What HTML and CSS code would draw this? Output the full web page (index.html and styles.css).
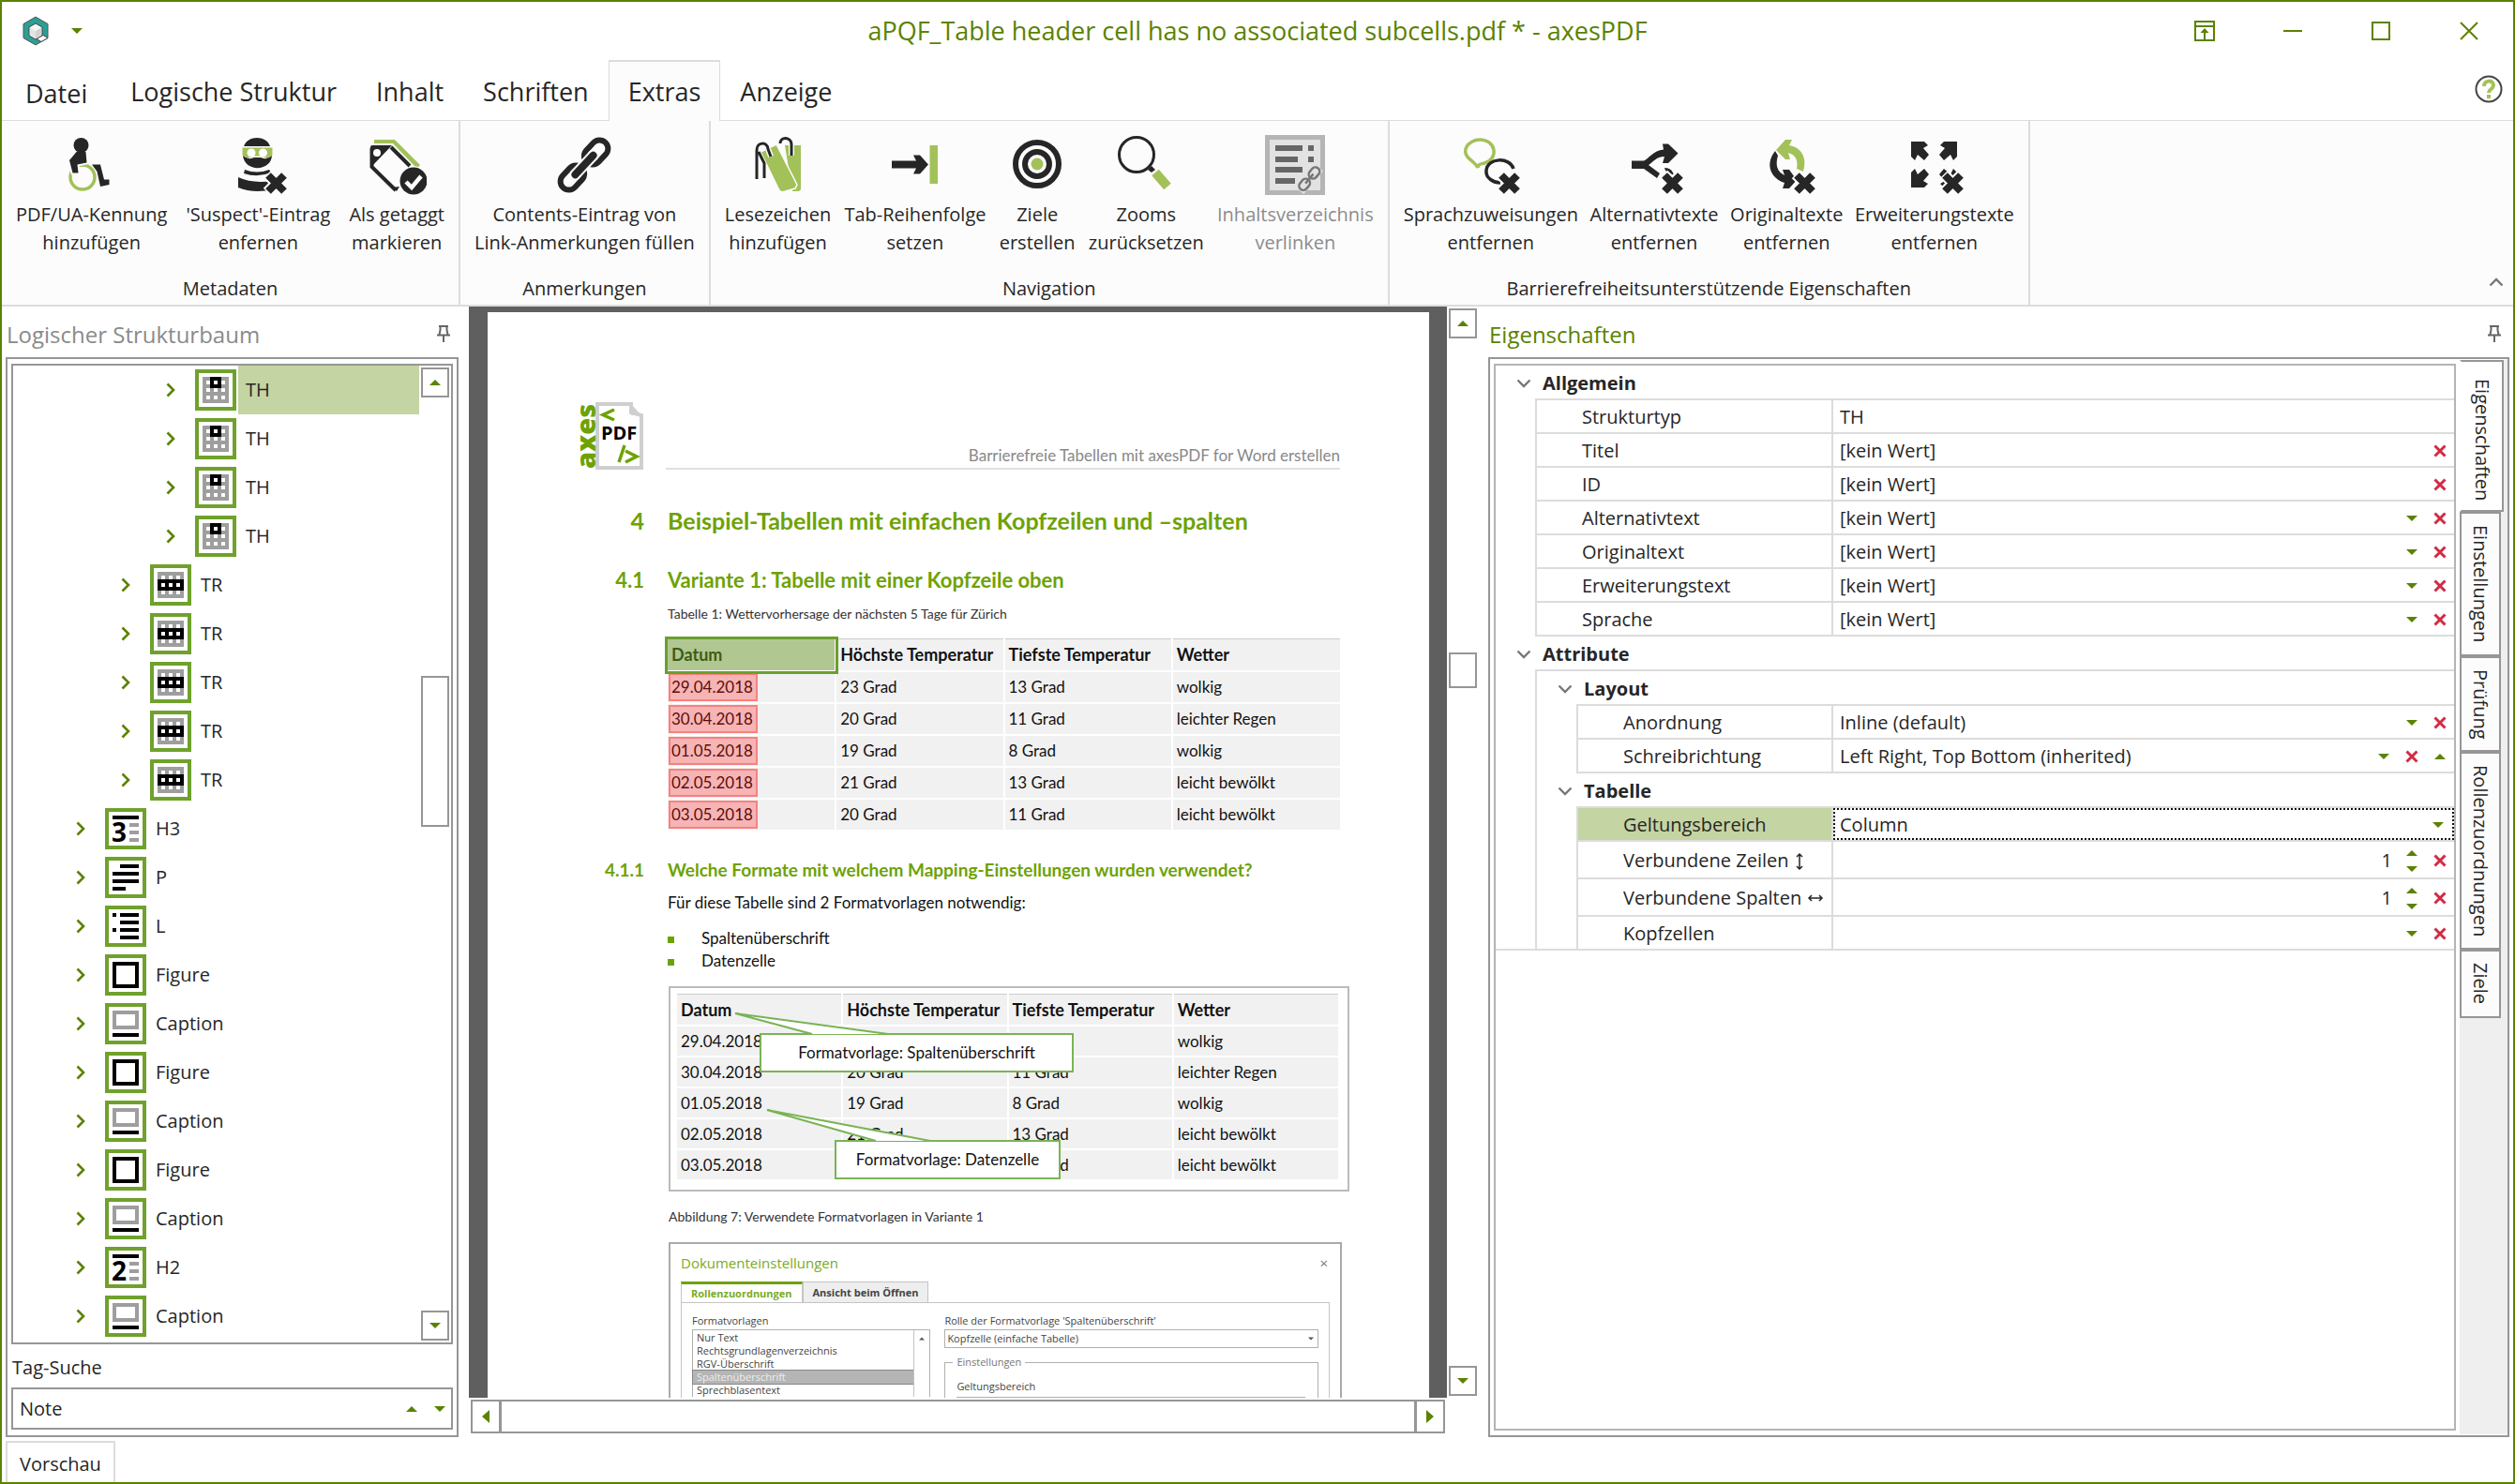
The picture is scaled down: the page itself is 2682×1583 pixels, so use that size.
FILE: index.html
```html
<!DOCTYPE html>
<html lang="de">
<head>
    <meta charset="UTF-8">
    <title>aPQF_Table header cell has no associated subcells.pdf * - axesPDF</title>
    <link rel="stylesheet" href="styles.css">
</head>
<body>
    <svg class="sprite" aria-hidden="true">
        <symbol id="down" viewBox="0 0 12 6"><path d="M0 0h12L6 6z"/></symbol>
        <symbol id="up" viewBox="0 0 12 6"><path d="M0 6h12L6 0z"/></symbol>
        <symbol id="left" viewBox="0 0 8 14"><path d="M8 0v14L0 7z"/></symbol>
        <symbol id="right" viewBox="0 0 8 14"><path d="M0 0v14l8-7z"/></symbol>
        <symbol id="chev" viewBox="0 0 10 16"><path d="M1.500 1.500L8 8l-6.500 6.500" fill="none" stroke="#5b8200" stroke-width="2.600"/></symbol>
        <symbol id="fold" viewBox="0 0 16 10"><path d="M1.500 1.500L8 8l6.500-6.500" fill="none" stroke="#777" stroke-width="2.400"/></symbol>
        <symbol id="clear" viewBox="0 0 14 14"><path d="M1.500 1.500l11 11M12.500 1.500l-11 11" fill="none" stroke="#d02b45" stroke-width="3"/></symbol>
        <symbol id="pin" viewBox="0 0 16 18"><path d="M3 1h10M4.500 1v4l-1 5M11.500 1v4l1 5M1 10.500h14M8 11v7" fill="none" stroke="#666" stroke-width="2"/></symbol>

        <!-- structure tags -->
        <symbol id="tag-th" viewBox="0 0 44 44">
            <path class="frame" d="M2 2h40v40H2z"/>
            <path fill="#9e9e9e" d="M8 8h28v28H8z"/><path d="M16 8h12v12H16z"/>
            <path fill="#fff" d="M12 12h4v4h-4zM20 12h4v4h-4zM28 12h4v4h-4zM12 20h4v4h-4zM20 20h4v4h-4zM28 20h4v4h-4zM12 28h4v4h-4zM20 28h4v4h-4zM28 28h4v4h-4z"/>
        </symbol>
        <symbol id="tag-tr" viewBox="0 0 44 44">
            <path class="frame" d="M2 2h40v40H2z"/>
            <path fill="#9e9e9e" d="M8 8h28v28H8z"/><path d="M8 16h28v12H8z"/>
            <path fill="#fff" d="M12 12h4v4h-4zM20 12h4v4h-4zM28 12h4v4h-4zM12 20h4v4h-4zM20 20h4v4h-4zM28 20h4v4h-4zM12 28h4v4h-4zM20 28h4v4h-4zM28 28h4v4h-4z"/>
        </symbol>
        <symbol id="tag-h" viewBox="0 0 44 44">
            <path class="frame" d="M2 2h40v40H2z"/>
            <path d="M8 8h28v4H8z"/><path fill="#9e9e9e" d="M26 16h10v4H26zM26 24h10v4H26zM26 32h10v4H26z"/>
        </symbol>
        <symbol id="tag-p" viewBox="0 0 44 44">
            <path class="frame" d="M2 2h40v40H2z"/>
            <path d="M16 8h20v4H16zM8 16h28v4H8zM8 24h28v4H8zM8 32h14v4H8z"/>
        </symbol>
        <symbol id="tag-l" viewBox="0 0 44 44">
            <path class="frame" d="M2 2h40v40H2z"/>
            <path d="M8 8h4v4H8zM8 24h4v4H8zM16 8h20v4H16zM16 16h20v4H16zM16 24h20v4H16zM16 32h20v4H16z"/>
        </symbol>
        <symbol id="tag-figure" viewBox="0 0 44 44">
            <path class="frame" d="M2 2h40v40H2z"/>
            <path d="M10 10h24v24H10z" fill="none" stroke="#000" stroke-width="4"/>
        </symbol>
        <symbol id="tag-caption" viewBox="0 0 44 44">
            <path class="frame" d="M2 2h40v40H2z"/>
            <path d="M10 10h24v16H10z" fill="none" stroke="#9e9e9e" stroke-width="4"/><path d="M8 32h28v4H8z"/>
        </symbol>

        <!-- black cross in the corner of the "entfernen" icons -->
        <symbol id="cross" viewBox="0 0 64 64">
            <path d="M42 42l19 19M61 42L42 61" stroke="#fcfcfc" stroke-width="12" fill="none"/>
            <path d="M43 43l17 17M60 43L43 60" stroke="#262626" stroke-width="8" fill="none"/>
        </symbol>
    </svg>

    <header class="titlebar">
        <div class="quick">
            <svg class="app-icon" viewBox="0 0 28 32">
                <path d="M14 1l13 7.500v15L14 31 1 23.500v-15z" fill="#2a9f93" stroke="#555" stroke-width="1"/>
                <path d="M14 8l7 4v9l-7 4-7-4v-9z" fill="#fff" stroke="#444" stroke-width="1"/>
                <path d="M14 9l6 3.500-6 3.500-6-3.500z" fill="#f6f6f6"/><path d="M8 12.500l6 3.500v8l-6-3.500z" fill="#e4e4e4"/><path d="M20 12.500L14 16v8l6-3.500z" fill="#d2d2d2"/>
                <path d="M15 24.500l7-4 5 3-7 4z" fill="#fff" stroke="#444" stroke-width="1"/>
            </svg>
            <button class="plain" aria-label="Schnellzugriff"><svg class="tri"><use href="#down"/></svg></button>
        </div>
        <h1 class="window-title">aPQF_Table header cell has no associated subcells.pdf * - axesPDF</h1>
        <div class="window-buttons">
            <button aria-label="Menüband"><svg viewBox="0 0 22 22"><path d="M1 1h20v20H1zM1 6h20M11 20V10"/><path d="M6.500 13L11 8l4.500 5z" fill="#5b8200" stroke="none"/></svg></button>
            <button aria-label="Minimieren"><svg viewBox="0 0 22 22"><path d="M1 11h20"/></svg></button>
            <button aria-label="Maximieren"><svg viewBox="0 0 22 22"><path d="M2 2h18v18H2z"/></svg></button>
            <button aria-label="Schließen"><svg viewBox="0 0 22 22"><path d="M2 2l18 18M20 2L2 20"/></svg></button>
        </div>
    </header>

    <nav class="tabs">
        <button class="tab file">Datei</button>
        <button class="tab">Logische Struktur</button>
        <button class="tab">Inhalt</button>
        <button class="tab">Schriften</button>
        <button class="tab active">Extras</button>
        <button class="tab">Anzeige</button>
        <button class="plain help" aria-label="Hilfe">
            <svg viewBox="0 0 30 30"><circle cx="15" cy="15" r="13.500" fill="#fff" stroke="#444" stroke-width="2"/><path d="M10 12c0-7 10-7 10-1 0 4-5 4-5 8M15 21v4" fill="none" stroke="#a3c159" stroke-width="4"/></svg>
        </button>
    </nav>

    <section class="ribbon">
        <div class="group metadata">
            <div class="tools">
                <button class="tool">
                    <svg viewBox="0 0 64 64"><circle cx="22" cy="45" r="13" fill="none" stroke="#a3c159" stroke-width="3.500"/><path d="M15.500 18h10l1 11.500-10 2 1 9h-6L8 27z" stroke="#fcfcfc" stroke-width="4" paint-order="stroke"/><circle cx="20.500" cy="11" r="8"/><path d="M32 31.500h9l4 16h5.500v5.500L41 55l-3.500-16z"/></svg>
                    PDF/UA-Kennung<br>hinzufügen
                </button>
                <button class="tool">
                    <svg viewBox="0 0 64 64"><path d="M17 12c4-12 24-12 28 0z"/><path d="M15.500 13.500h32v8q-7 5-12 1h-8q-5 4-12-1z" fill="#a3c159"/><circle cx="25" cy="19" r="4.500" fill="#fff"/><circle cx="37.500" cy="19" r="4.500" fill="#fff"/><path d="M16 22q6 5 12 2h7q6 3 12-2c-1 17-29 18-31 0z"/><path d="M18 37q13 5 26 0l2 3q-14 6-29 1z"/><path d="M11 45q15 7 36 4l2 9q-22 5-38-2z"/><use href="#cross"/></svg>
                    'Suspect'-Eintrag<br>enfernen
                </button>
                <button class="tool">
                    <svg viewBox="0 0 64 64"><path d="M8 9V5h22l27 27-2 2-4-1L28 9H18z" fill="#a3c159"/><path d="M5.500 14v20L31 59M26 13l20 20" fill="none" stroke="#262626" stroke-width="4"/><path d="M27 11H6q-2 0-2 2v22z"/><circle cx="11" cy="19" r="4" fill="#fcfcfc"/><path d="M27 56l5 4 3-5z"/><circle cx="50" cy="49" r="14.500"/><path d="M42 50l6 6 10-12" fill="none" stroke="#fff" stroke-width="4.500"/></svg>
                    Als getaggt<br>markieren
                </button>
            </div>
            <div class="group-name">Metadaten</div>
        </div>
        <div class="group annotations">
            <div class="tools">
                <button class="tool">
                    <svg viewBox="0 0 64 64"><g transform="rotate(-47 32 32)" fill="none" stroke="#262626" stroke-width="6"><rect x="-1" y="23" width="29" height="18" rx="9"/><rect x="36" y="23" width="29" height="18" rx="9"/><path d="M16 32h32" stroke="#fcfcfc" stroke-width="12"/><path d="M18 32h28" stroke-width="8" stroke-linecap="round"/></g></svg>
                    Contents-Eintrag von<br>Link-Anmerkungen füllen
                </button>
            </div>
            <div class="group-name">Anmerkungen</div>
        </div>
        <div class="group navigation">
            <div class="tools">
                <button class="tool">
                    <svg viewBox="0 0 64 64"><path d="M40 11h17v47q-1 2-3 2h-6z" fill="#a3c159"/><path d="M14 18l17-8 22 43-2 4-14 4-3-2z" fill="#a3c159" stroke="#fcfcfc" stroke-width="1.500"/><g fill="none"><path d="M22 15l3 8M35 9c0-8 12-7 12 1v12" stroke="#fcfcfc" stroke-width="6"/><path d="M10 47V16c0-9 12-9 12-1l3 8M18 46V30l-6-12M35 9c0-8 12-7 12 1v12" stroke="#262626" stroke-width="3"/></g></svg>
                    Lesezeichen<br>hinzufügen
                </button>
                <button class="tool">
                    <svg viewBox="0 0 64 64"><path d="M7 27.500h26l-3-6h7l9 10-9 10h-7l3-6H7z"/><path d="M47.500 11H56v41h-8.500z" fill="#a3c159"/></svg>
                    Tab-Reihenfolge<br>setzen
                </button>
                <button class="tool">
                    <svg viewBox="0 0 64 64"><g fill="none" stroke="#262626"><circle cx="32" cy="31" r="23" stroke-width="6"/><circle cx="32" cy="31" r="13" stroke-width="6"/></g><circle cx="32" cy="31" r="6.500" fill="#a3c159"/></svg>
                    Ziele<br>erstellen
                </button>
                <button class="tool">
                    <svg viewBox="0 0 64 64"><circle cx="22" cy="21" r="18.500" fill="none" stroke="#262626" stroke-width="3"/><path d="M34 37l4-4 4 4-4 3z"/><path d="M42 40l13 15" stroke="#a3c159" stroke-width="10"/></svg>
                    Zooms<br>zurücksetzen
                </button>
                <button class="tool" disabled>
                    <svg viewBox="0 0 64 64"><path d="M2.500 2.500h59v59h-59z" fill="#e2e2e2" stroke="#b5b5b5" stroke-width="5"/><path d="M11 11h29v6H11zM11 23h24v6H11zM11 34h29v6H11zM11 46h21v6H11zM46 11h6v6h-6zM46 23h6v6h-6z" fill="#666"/><g transform="rotate(-50 47 47)" fill="none"><path d="M31 47h32" stroke="#e2e2e2" stroke-width="12"/><g stroke="#777" stroke-width="2.500"><rect x="33" y="42.500" width="13" height="9" rx="4.500"/><rect x="49" y="42.500" width="13" height="9" rx="4.500"/><path d="M41 47h13"/></g></g></svg>
                    Inhaltsverzeichnis<br>verlinken
                </button>
            </div>
            <div class="group-name">Navigation</div>
        </div>
        <div class="group accessibility">
            <div class="tools">
                <button class="tool">
                    <svg viewBox="0 0 64 64"><g fill="none" stroke-width="3.500"><path d="M18 35c-1-3-4-5-6-7-15-10-4-23 8-23 17 0 21 20 5 25-4 1-7 1-7 5z" stroke="#a3c159"/><path d="M56 36c-4-13-28-12-29 2-1 8 8 13 15 13" stroke="#262626"/></g><use href="#cross"/></svg>
                    Sprachzuweisungen<br>entfernen
                </button>
                <button class="tool">
                    <svg viewBox="0 0 64 64"><path d="M8 27.500h13c5-2 10-11 21-12l-1-6h6l10.500 10L47 30h-6l2-7c-9 0-12 6-17 9l12 9-3 5-14-10H8z"/><path d="M43 35q8 0 10 8l-4-2-5-3z"/><use href="#cross"/></svg>
                    Alternativtexte<br>entfernen
                </button>
                <button class="tool">
                    <svg viewBox="0 0 64 64"><path d="M21 16L31 5h7l-3 6c15 3 19 15 15 28l-7-3c2-10-2-15-9-17l2 7h-5z" fill="#a3c159"/><path d="M20 17l3 5c-3 10-1 17 7 21l-2-6h7l8 11-8 9h-7l2-6C15 46 9 31 20 17z"/><use href="#cross"/></svg>
                    Originaltexte<br>entfernen
                </button>
                <button class="tool">
                    <svg viewBox="0 0 64 64"><path id="corner" d="M7 7h14l4 4-5 3 6 7-5 6-7-6-3 6-4-4z"/><use href="#corner" transform="matrix(-1 0 0 1 63 0)"/><use href="#corner" transform="matrix(1 0 0 -1 0 63)"/><use href="#corner" transform="matrix(-1 0 0 -1 63 63)"/><use href="#cross"/></svg>
                    Erweiterungstexte<br>entfernen
                </button>
            </div>
            <div class="group-name">Barrierefreiheitsunterstützende Eigenschaften</div>
        </div>
        <button class="plain collapse" aria-label="Menüband reduzieren"><svg viewBox="0 0 16 10"><path d="M1.500 8.500L8 2l6.500 6.500" fill="none" stroke="#777" stroke-width="2.400"/></svg></button>
    </section>

    <main class="workspace">
        <section class="panel">
            <div class="panel-head">
                <h2>Logischer Strukturbaum</h2>
                <button class="plain" aria-label="Anheften"><svg class="pin"><use href="#pin"/></svg></button>
            </div>
            <div class="panel-box tree-panel">
                <div class="tree">
                    <ul>
                        <li class="l3 selected"><svg class="chev"><use href="#chev"/></svg><svg class="tag"><use href="#tag-th"/></svg><span>TH</span></li>
                        <li class="l3"><svg class="chev"><use href="#chev"/></svg><svg class="tag"><use href="#tag-th"/></svg><span>TH</span></li>
                        <li class="l3"><svg class="chev"><use href="#chev"/></svg><svg class="tag"><use href="#tag-th"/></svg><span>TH</span></li>
                        <li class="l3"><svg class="chev"><use href="#chev"/></svg><svg class="tag"><use href="#tag-th"/></svg><span>TH</span></li>
                        <li class="l2"><svg class="chev"><use href="#chev"/></svg><svg class="tag"><use href="#tag-tr"/></svg><span>TR</span></li>
                        <li class="l2"><svg class="chev"><use href="#chev"/></svg><svg class="tag"><use href="#tag-tr"/></svg><span>TR</span></li>
                        <li class="l2"><svg class="chev"><use href="#chev"/></svg><svg class="tag"><use href="#tag-tr"/></svg><span>TR</span></li>
                        <li class="l2"><svg class="chev"><use href="#chev"/></svg><svg class="tag"><use href="#tag-tr"/></svg><span>TR</span></li>
                        <li class="l2"><svg class="chev"><use href="#chev"/></svg><svg class="tag"><use href="#tag-tr"/></svg><span>TR</span></li>
                        <li><svg class="chev"><use href="#chev"/></svg><svg class="tag"><use href="#tag-h"/><text x="7" y="36">3</text></svg><span>H3</span></li>
                        <li><svg class="chev"><use href="#chev"/></svg><svg class="tag"><use href="#tag-p"/></svg><span>P</span></li>
                        <li><svg class="chev"><use href="#chev"/></svg><svg class="tag"><use href="#tag-l"/></svg><span>L</span></li>
                        <li><svg class="chev"><use href="#chev"/></svg><svg class="tag"><use href="#tag-figure"/></svg><span>Figure</span></li>
                        <li><svg class="chev"><use href="#chev"/></svg><svg class="tag"><use href="#tag-caption"/></svg><span>Caption</span></li>
                        <li><svg class="chev"><use href="#chev"/></svg><svg class="tag"><use href="#tag-figure"/></svg><span>Figure</span></li>
                        <li><svg class="chev"><use href="#chev"/></svg><svg class="tag"><use href="#tag-caption"/></svg><span>Caption</span></li>
                        <li><svg class="chev"><use href="#chev"/></svg><svg class="tag"><use href="#tag-figure"/></svg><span>Figure</span></li>
                        <li><svg class="chev"><use href="#chev"/></svg><svg class="tag"><use href="#tag-caption"/></svg><span>Caption</span></li>
                        <li><svg class="chev"><use href="#chev"/></svg><svg class="tag"><use href="#tag-h"/><text x="7" y="36">2</text></svg><span>H2</span></li>
                        <li><svg class="chev"><use href="#chev"/></svg><svg class="tag"><use href="#tag-caption"/></svg><span>Caption</span></li>
                    </ul>
                    <div class="scroll-v">
                        <button aria-label="Nach oben"><svg class="tri"><use href="#up"/></svg></button>
                        <div class="track tree-track"><div class="thumb"></div></div>
                        <button aria-label="Nach unten"><svg class="tri"><use href="#down"/></svg></button>
                    </div>
                </div>
                <label class="search-label" for="tagSearch">Tag-Suche</label>
                <div class="search">
                    <input id="tagSearch" type="text" value="Note">
                    <button class="plain" aria-label="Vorheriges"><svg class="tri"><use href="#up"/></svg></button>
                    <button class="plain" aria-label="Nächstes"><svg class="tri"><use href="#down"/></svg></button>
                </div>
            </div>
        </section>

        <section class="viewer">
            <div class="canvas">
                <article class="page">
                    <div class="doc-head">
                        <div class="logo">
                            <span class="logo-name">axes</span>
                            <svg viewBox="0 0 51 72"><path d="M2 2h36v9l11 3v56H2z" fill="#fff" stroke="#cfcfcf" stroke-width="4"/><path d="M38 2v12h11z" fill="#cfcfcf"/><path d="M20 8L8 13.500 20 19M31 46l-6 18M32 52l12 6-12 6" fill="none" stroke="#6ea204" stroke-width="3.500"/><text x="6" y="40">PDF</text></svg>
                        </div>
                        <div class="doc-title">Barrierefreie Tabellen mit axesPDF for Word erstellen</div>
                    </div>
                    <h2 class="h1"><span>4</span>Beispiel-Tabellen mit einfachen Kopfzeilen und –spalten</h2>
                    <h3 class="h2"><span>4.1</span>Variante 1: Tabelle mit einer Kopfzeile oben</h3>
                    <table class="weather">
                        <caption>Tabelle 1: Wettervorhersage der nächsten 5 Tage für Zürich</caption>
                        <tr><th class="marked">Datum</th><th>Höchste Temperatur</th><th>Tiefste Temperatur</th><th>Wetter</th></tr>
                        <tr><td><span class="error">29.04.2018</span></td><td>23 Grad</td><td>13 Grad</td><td>wolkig</td></tr>
                        <tr><td><span class="error">30.04.2018</span></td><td>20 Grad</td><td>11 Grad</td><td>leichter Regen</td></tr>
                        <tr><td><span class="error">01.05.2018</span></td><td>19 Grad</td><td>8 Grad</td><td>wolkig</td></tr>
                        <tr><td><span class="error">02.05.2018</span></td><td>21 Grad</td><td>13 Grad</td><td>leicht bewölkt</td></tr>
                        <tr><td><span class="error">03.05.2018</span></td><td>20 Grad</td><td>11 Grad</td><td>leicht bewölkt</td></tr>
                    </table>
                    <h4 class="h3"><span>4.1.1</span>Welche Formate mit welchem Mapping-Einstellungen wurden verwendet?</h4>
                    <p>Für diese Tabelle sind 2 Formatvorlagen notwendig:</p>
                    <ul class="styles">
                        <li>Spaltenüberschrift</li>
                        <li>Datenzelle</li>
                    </ul>
                    <figure>
                        <div class="frame-box">
                            <table class="weather">
                                <tr><th>Datum</th><th>Höchste Temperatur</th><th>Tiefste Temperatur</th><th>Wetter</th></tr>
                                <tr><td>29.04.2018</td><td>23 Grad</td><td>13 Grad</td><td>wolkig</td></tr>
                                <tr><td>30.04.2018</td><td>20 Grad</td><td>11 Grad</td><td>leichter Regen</td></tr>
                                <tr><td>01.05.2018</td><td>19 Grad</td><td>8 Grad</td><td>wolkig</td></tr>
                                <tr><td>02.05.2018</td><td>21 Grad</td><td>13 Grad</td><td>leicht bewölkt</td></tr>
                                <tr><td>03.05.2018</td><td>20 Grad</td><td>11 Grad</td><td>leicht bewölkt</td></tr>
                            </table>
                            <div class="callout first">Formatvorlage: Spaltenüberschrift
                                <svg viewBox="0 0 168 24"><path d="M84 23L2 1l163 22"/></svg>
                            </div>
                            <div class="callout second">Formatvorlage: Datenzelle
                                <svg viewBox="0 0 178 35"><path d="M118 34L2 1l174 33"/></svg>
                            </div>
                        </div>
                        <figcaption>Abbildung 7: Verwendete Formatvorlagen in Variante 1</figcaption>
                    </figure>
                    <div class="dialog">
                        <div class="dialog-head"><span>Dokumenteinstellungen</span><button class="plain" aria-label="Schließen">×</button></div>
                        <div class="dialog-tabs">
                            <button class="on">Rollenzuordnungen</button>
                            <button>Ansicht beim Öffnen</button>
                        </div>
                        <div class="dialog-body">
                            <div class="style-list">
                                <div class="small-label">Formatvorlagen</div>
                                <div class="list">
                                    <ul>
                                        <li>Nur Text</li>
                                        <li>Rechtsgrundlagenverzeichnis</li>
                                        <li>RGV-Überschrift</li>
                                        <li class="picked">Spaltenüberschrift</li>
                                        <li>Sprechblasentext</li>
                                    </ul>
                                    <div class="mini-scroll"><svg><use href="#up"/></svg></div>
                                </div>
                            </div>
                            <div class="role">
                                <label class="small-label" for="role">Rolle der Formatvorlage 'Spaltenüberschrift'</label>
                                <div class="combo">
                                    <select id="role"><option>Kopfzelle (einfache Tabelle)</option></select>
                                    <svg><use href="#down"/></svg>
                                </div>
                                <fieldset>
                                    <legend>Einstellungen</legend>
                                    <label class="small-label" for="scope2">Geltungsbereich</label>
                                    <input id="scope2" type="text">
                                </fieldset>
                            </div>
                        </div>
                    </div>
                </article>
            </div>
            <div class="scroll-v">
                <button aria-label="Nach oben"><svg class="tri"><use href="#up"/></svg></button>
                <div class="track doc-track"><div class="thumb"></div></div>
                <button aria-label="Nach unten"><svg class="tri"><use href="#down"/></svg></button>
            </div>
            <div class="scroll-h">
                <button aria-label="Nach links"><svg><use href="#left"/></svg></button>
                <div class="thumb"></div>
                <button aria-label="Nach rechts"><svg><use href="#right"/></svg></button>
            </div>
        </section>

        <section class="panel">
            <div class="panel-head active">
                <h2>Eigenschaften</h2>
                <button class="plain" aria-label="Anheften"><svg class="pin"><use href="#pin"/></svg></button>
            </div>
            <div class="panel-box props-panel">
                <form class="props">
                    <div class="section">
                        <div class="section-name"><svg class="fold"><use href="#fold"/></svg>Allgemein</div>
                        <div class="rows">
                            <div class="row"><label for="type">Strukturtyp</label><div class="value"><input id="type" value="TH" readonly></div></div>
                            <div class="row"><label for="titel">Titel</label><div class="value"><input id="titel" value="[kein Wert]"><button type="button" aria-label="Löschen"><svg class="x"><use href="#clear"/></svg></button></div></div>
                            <div class="row"><label for="id">ID</label><div class="value"><input id="id" value="[kein Wert]"><button type="button" aria-label="Löschen"><svg class="x"><use href="#clear"/></svg></button></div></div>
                            <div class="row"><label for="alt">Alternativtext</label><div class="value"><input id="alt" value="[kein Wert]"><button type="button" aria-label="Öffnen"><svg class="tri"><use href="#down"/></svg></button><button type="button" aria-label="Löschen"><svg class="x"><use href="#clear"/></svg></button></div></div>
                            <div class="row"><label for="orig">Originaltext</label><div class="value"><input id="orig" value="[kein Wert]"><button type="button" aria-label="Öffnen"><svg class="tri"><use href="#down"/></svg></button><button type="button" aria-label="Löschen"><svg class="x"><use href="#clear"/></svg></button></div></div>
                            <div class="row"><label for="erw">Erweiterungstext</label><div class="value"><input id="erw" value="[kein Wert]"><button type="button" aria-label="Öffnen"><svg class="tri"><use href="#down"/></svg></button><button type="button" aria-label="Löschen"><svg class="x"><use href="#clear"/></svg></button></div></div>
                            <div class="row"><label for="lang">Sprache</label><div class="value"><select id="lang"><option>[kein Wert]</option></select><button type="button" aria-label="Öffnen"><svg class="tri"><use href="#down"/></svg></button><button type="button" aria-label="Löschen"><svg class="x"><use href="#clear"/></svg></button></div></div>
                        </div>
                    </div>
                    <div class="section">
                        <div class="section-name"><svg class="fold"><use href="#fold"/></svg>Attribute</div>
                        <div class="rows">
                            <div class="section">
                                <div class="section-name"><svg class="fold"><use href="#fold"/></svg>Layout</div>
                                <div class="rows">
                                    <div class="row"><label for="place">Anordnung</label><div class="value"><select id="place"><option>Inline (default)</option></select><button type="button" aria-label="Öffnen"><svg class="tri"><use href="#down"/></svg></button><button type="button" aria-label="Löschen"><svg class="x"><use href="#clear"/></svg></button></div></div>
                                    <div class="row"><label for="mode">Schreibrichtung</label><div class="value"><select id="mode"><option>Left Right, Top Bottom (inherited)</option></select><button type="button" aria-label="Öffnen"><svg class="tri"><use href="#down"/></svg></button><button type="button" aria-label="Löschen"><svg class="x"><use href="#clear"/></svg></button><button type="button" aria-label="Übergeordnet"><svg class="tri"><use href="#up"/></svg></button></div></div>
                                </div>
                            </div>
                            <div class="section">
                                <div class="section-name"><svg class="fold"><use href="#fold"/></svg>Tabelle</div>
                                <div class="rows">
                                    <div class="row current"><label for="scope">Geltungsbereich</label><div class="value"><select id="scope"><option>Column</option></select><button type="button" aria-label="Öffnen"><svg class="tri"><use href="#down"/></svg></button></div></div>
                                    <div class="row tall"><label for="rowspan">Verbundene Zeilen <svg class="arrow" viewBox="0 0 10 20"><path d="M5 3v16M2 6l3-3 3 3M2 16l3 3 3-3"/></svg></label><div class="value number"><input id="rowspan" value="1"><span class="spin"><button type="button" aria-label="Mehr"><svg class="tri"><use href="#up"/></svg></button><button type="button" aria-label="Weniger"><svg class="tri"><use href="#down"/></svg></button></span><button type="button" aria-label="Löschen"><svg class="x"><use href="#clear"/></svg></button></div></div>
                                    <div class="row tall"><label for="colspan">Verbundene Spalten <svg class="arrow wide" viewBox="0 0 18 10"><path d="M2 5h14M5 2L2 5l3 3M13 2l3 3-3 3"/></svg></label><div class="value number"><input id="colspan" value="1"><span class="spin"><button type="button" aria-label="Mehr"><svg class="tri"><use href="#up"/></svg></button><button type="button" aria-label="Weniger"><svg class="tri"><use href="#down"/></svg></button></span><button type="button" aria-label="Löschen"><svg class="x"><use href="#clear"/></svg></button></div></div>
                                    <div class="row"><label for="heads">Kopfzellen</label><div class="value"><input id="heads" value=""><button type="button" aria-label="Öffnen"><svg class="tri"><use href="#down"/></svg></button><button type="button" aria-label="Löschen"><svg class="x"><use href="#clear"/></svg></button></div></div>
                                </div>
                            </div>
                        </div>
                    </div>
                </form>
                <nav class="side-tabs">
                    <button class="active">Eigenschaften</button>
                    <button>Einstellungen</button>
                    <button>Prüfung</button>
                    <button>Rollenzuordnungen</button>
                    <button>Ziele</button>
                </nav>
            </div>
        </section>
    </main>

    <footer>
        <button class="preview">Vorschau</button>
    </footer>
</body>
</html>
```
FILE: styles.css
```css
* {
  box-sizing: border-box;
}

body {
  margin: 0;
  min-height: 100vh;
  display: flex;
  flex-direction: column;
  border: 2px solid #5b8200;
  background: #ffffff;
  color: #262626;
  font: 20px/30px "Open Sans", "Noto Sans", sans-serif;
}

h1, h2, h3, h4, p, ul, figure {
  margin: 0;
  padding: 0;
}

ul {
  list-style: none;
}

button, input, select {
  font: inherit;
  color: inherit;
  background: none;
  border: none;
  border-radius: 0;
  margin: 0;
  padding: 0;
  min-width: 0;
  appearance: none;
  outline: none;
}

svg {
  display: block;
  flex: none;
}

.sprite {
  position: absolute;
  width: 0;
  height: 0;
}

.plain {
  display: flex;
}

.tri {
  width: 12px;
  height: 6px;
  fill: #5b8200;
}

.frame {
  fill: #ffffff;
  stroke: #6fa12c;
  stroke-width: 4;
}

/* Title bar */
.titlebar {
  display: grid;
  grid-template-columns: 1fr auto 1fr;
  align-items: center;
  height: 62px;
}

.quick {
  display: flex;
  align-items: center;
  gap: 24px;
  padding-left: 22px;
}

.app-icon {
  width: 28px;
  height: 32px;
}

.window-title {
  font-size: 27px;
  font-weight: 400;
  color: #5b8200;
}

.window-buttons {
  display: flex;
  justify-content: flex-end;
}

.window-buttons button {
  display: flex;
  justify-content: center;
  width: 94px;
}

.window-buttons svg {
  width: 22px;
  height: 22px;
  fill: none;
  stroke: #5b8200;
  stroke-width: 2;
}

/* Tabs */
.tabs {
  display: flex;
  height: 64px;
}

.tab {
  padding: 0 20px;
  margin-bottom: -1px;
  font-size: 27px;
  border: 1px solid transparent;
  border-top-width: 2px;
  border-bottom: none;
}

.tab.file {
  padding: 4px 24px 0 24px;
}

.tab.active {
  background: #fcfcfc;
  border-color: #dcdcdc;
  z-index: 1;
}

.help {
  margin: 16px 11px 0 auto;
  height: 30px;
}

.help svg {
  width: 30px;
  height: 30px;
}

/* Ribbon */
.ribbon {
  display: flex;
  height: 199px;
  background: #fcfcfc;
  border-top: 1px solid #dcdcdc;
  border-bottom: 2px solid #dcdcdc;
}

.group {
  display: flex;
  flex-direction: column;
  justify-content: space-between;
  padding: 15px 9px 2px;
  border-right: 2px solid #dcdcdc;
}

.metadata {
  min-width: 489px;
}

.annotations {
  min-width: 266px;
}

.navigation {
  min-width: 724px;
}

.accessibility {
  min-width: 683px;
}

.tools {
  display: flex;
  justify-content: space-between;
}

.annotations .tools {
  justify-content: center;
}

.tool {
  padding: 0 6px;
  white-space: nowrap;
}

.tool svg {
  width: 64px;
  height: 64px;
  margin: 0 auto 6px;
  fill: #262626;
}

.tool:disabled {
  color: #8c8c8c;
}

.group-name {
  text-align: center;
}

.collapse {
  margin: auto 10px 19px auto;
}

.collapse svg {
  width: 16px;
  height: 10px;
}

/* Workspace */
.workspace {
  flex: 1;
  display: grid;
  grid-template-columns: 483fr 1074fr 1089fr;
  column-gap: 12px;
  padding: 0 4px;
  min-height: 0;
}

.panel {
  display: flex;
  flex-direction: column;
}

.panel-head {
  display: flex;
  justify-content: space-between;
  height: 54px;
  padding: 15px 8px 0 1px;
  color: #8a8a8a;
}

.panel-head h2 {
  font-size: 24px;
  font-weight: 400;
}

.panel-head.active {
  color: #5b8200;
}

.pin {
  width: 16px;
  height: 18px;
  margin-top: 5px;
}

.panel-box {
  flex: 1;
  border: 2px solid #969696;
}

.tree-panel {
  display: flex;
  flex-direction: column;
  padding: 5px 4px;
}

.tree {
  flex: 1;
  display: flex;
  border: 2px solid #969696;
}

.tree ul {
  flex: 1;
}

.tree li {
  display: flex;
  align-items: center;
  height: 52px;
  padding-left: 67px;
}

.tree li.l2 {
  padding-left: 115px;
}

.tree li.l3 {
  padding-left: 163px;
}

.tree li span {
  flex: 1;
  padding-left: 8px;
  margin-left: 2px;
  line-height: 52px;
}

.tree li.selected span {
  background: #c4d4a2;
}

.chev {
  width: 10px;
  height: 16px;
  margin-right: 21px;
}

.tag {
  width: 44px;
  height: 44px;
}

.tag text {
  font: bold 28px "Noto Sans", sans-serif;
}

/* Scrollbars */
.scroll-v {
  display: flex;
  flex-direction: column;
  width: 30px;
}

.tree .scroll-v {
  margin: 2px;
}

.scroll-v button {
  display: flex;
  align-items: center;
  justify-content: center;
  height: 32px;
  border: 2px solid #969696;
}

.track {
  flex: 1;
  display: flex;
  flex-direction: column;
}

.track::before {
  content: "";
}

.thumb {
  border: 2px solid #969696;
}

.tree-track::before {
  flex: 298;
}

.tree-track .thumb {
  flex: 158;
}

.tree-track::after {
  content: "";
  flex: 518;
}

.doc-track::before {
  flex: 336;
}

.doc-track .thumb {
  flex: 34;
}

.doc-track::after {
  content: "";
  flex: 725;
}

.scroll-h {
  display: flex;
  height: 36px;
  margin: 2px;
}

.scroll-h button {
  display: flex;
  align-items: center;
  justify-content: center;
  width: 32px;
  border: 2px solid #969696;
}

.scroll-h svg {
  width: 8px;
  height: 14px;
  fill: #5b8200;
}

.scroll-h .thumb {
  flex: 1;
  margin: 0 -1px;
}

/* Tag search */
.search-label {
  padding: 10px 1px 6px;
}

.search {
  display: flex;
  align-items: center;
  height: 45px;
  margin-bottom: 1px;
  padding: 0 6px 0 7px;
  gap: 18px;
  border: 2px solid #969696;
}

.search input {
  flex: 1;
}

/* Document viewer */
.viewer {
  display: grid;
  grid-template-columns: minmax(0, 1fr) 32px;
  grid-template-rows: 1fr 42px;
  margin-left: -1px;
}

.viewer > .scroll-v {
  margin: 2px 0 2px 2px;
}

.canvas {
  height: 0;
  min-height: 100%;
  padding: 6px 19px 0 20px;
  overflow: hidden;
  background: #5f5f5f;
}

.page {
  padding: 96px 95px 0 192px;
  min-height: 100%;
  background: #ffffff;
  color: #111111;
  font: 17px/24px Lato, sans-serif;
}

.doc-head {
  display: flex;
  height: 72px;
  margin-left: -99px;
  gap: 24px;
}

.logo {
  display: flex;
  gap: 1px;
}

.logo-name {
  writing-mode: vertical-rl;
  transform: rotate(180deg);
  text-align: center;
  color: #6ea204;
  font: 800 29px/21px "Open Sans", sans-serif;
  width: 21px;
}

.logo svg {
  width: 51px;
  height: 72px;
}

.logo text {
  font: bold 20px "Open Sans", sans-serif;
}

.doc-title {
  flex: 1;
  padding-top: 45px;
  text-align: right;
  color: #888888;
  border-bottom: 2px solid #e0e0e0;
}

.h1, .h2, .h3 {
  display: flex;
  font-weight: 700;
  color: #6ea204;
}

.h1 span, .h2 span, .h3 span {
  width: 80px;
  margin-left: -105px;
  margin-right: 25px;
  text-align: right;
}

.h1 {
  margin-top: 34px;
  font-size: 25px;
  line-height: 40px;
}

.h2 {
  margin-top: 28px;
  font-size: 22px;
  line-height: 32px;
}

.h3 {
  margin-top: 27px;
  margin-bottom: 9px;
  font-size: 19px;
  line-height: 28px;
}

.weather {
  width: 100%;
  table-layout: fixed;
  border-collapse: collapse;
  border-bottom: 2px solid #cccccc;
}

.weather caption {
  padding: 10px 0 16px;
  text-align: left;
  font-size: 14px;
  line-height: 20px;
  color: #333333;
}

.weather th, .weather td {
  height: 34px;
  padding: 0 4px;
  text-align: left;
  white-space: nowrap;
  background: #f1f1f1;
  border: 2px solid #ffffff;
  border-left: none;
}

.weather th {
  font-size: 18px;
}

.weather tr:first-child > * {
  border-top: 1px solid #cccccc;
}

.weather tr > :last-child {
  border-right: none;
}

.weather .marked {
  background: #b1c791;
  color: #3d5c14;
  outline: 3px solid #6a9f2f;
}

.error {
  display: inline-block;
  margin-left: -1px;
  padding: 0 3px 0 1px;
  line-height: 26px;
  color: #5e0d0d;
  background: #f6b4b4;
  outline: 2px solid #fb7f7f;
}

.styles {
  margin-top: 14px;
}

.styles li {
  display: flex;
  align-items: center;
}

.styles li::before {
  content: "";
  width: 7px;
  height: 7px;
  margin: 4px 29px 0 0;
  background: #6ea204;
}

figure {
  margin: 15px -10px 0 1px;
}

.frame-box {
  position: relative;
  padding: 6px 10px 9px 7px;
  border: 2px solid #bbbbbb;
}

.frame-box td {
  height: 33px;
}

.callout {
  position: absolute;
  display: flex;
  align-items: center;
  justify-content: center;
  height: 42px;
  background: #ffffff;
  border: 2px solid #7ab356;
}

.callout svg {
  position: absolute;
  fill: #ffffff;
  stroke: #7ab356;
  stroke-width: 2;
}

.callout.first {
  left: 95px;
  top: 48px;
  width: 335px;
}

.callout.first svg {
  left: -30px;
  top: -24px;
  width: 168px;
}

.callout.second {
  left: 175px;
  top: 162px;
  width: 241px;
}

.callout.second svg {
  left: -76px;
  top: -35px;
  width: 178px;
}

figcaption {
  margin-top: 17px;
  font-size: 14px;
  line-height: 20px;
  color: #333333;
}

/* Settings dialog on the page */
.dialog {
  margin: 17px -2px 0 1px;
  padding: 6px 11px 0;
  border: 2px solid #aaaaaa;
  border-bottom: none;
  font: 11px/14px "Open Sans", sans-serif;
  color: #444444;
}

.dialog-head {
  display: flex;
  justify-content: space-between;
  align-items: center;
  height: 28px;
  color: #7bab1e;
  font-size: 15px;
}

.dialog-head button {
  padding-right: 2px;
  color: #777777;
}

.dialog-tabs {
  display: flex;
  margin-top: 6px;
}

.dialog-tabs button {
  height: 22px;
  padding: 0 10px;
  font-weight: 700;
  background: #eeeeee;
  border: 1px solid #c4c4c4;
  border-bottom: none;
}

.dialog-tabs .on {
  background: #ffffff;
  color: #7bab1e;
  border-top: 3px solid #6ea204;
}

.dialog-body {
  display: grid;
  grid-template-columns: 254fr 398fr;
  gap: 15px;
  padding: 12px 11px 0;
  border: 1px solid #c4c4c4;
  border-bottom: none;
}

.small-label {
  display: block;
}

.list {
  display: flex;
  margin-top: 2px;
  border: 1px solid #b0b0b0;
  border-bottom: none;
}

.list ul {
  flex: 1;
  padding-top: 1px;
}

.list li {
  padding-left: 4px;
}

.list .picked {
  background: #b5b5b5;
  color: #eeeeee;
  outline: 1px solid #888888;
}

.mini-scroll {
  width: 17px;
  padding: 7px 5px;
  border-left: 1px solid #c4c4c4;
}

.mini-scroll svg, .combo svg {
  width: 6px;
  height: 4px;
  fill: #555555;
}

.combo {
  display: flex;
  align-items: center;
  height: 20px;
  margin-top: 2px;
  padding: 0 4px 0 2px;
  border: 1px solid #b0b0b0;
}

.combo select {
  flex: 1;
}

fieldset {
  margin: 8px 0 0;
  padding: 12px 13px 0 12px;
  border: 1px solid #b0b0b0;
  border-bottom: none;
}

legend {
  padding: 0 4px;
  margin-left: -4px;
  color: #777777;
}

fieldset input {
  width: 100%;
  height: 20px;
  margin-top: 4px;
  border: 1px solid #b0b0b0;
}

/* Properties */
.props-panel {
  display: flex;
  gap: 4px;
  padding: 1px 3px 1px 4px;
}

.props {
  flex: 1;
  margin: 4px 0;
  border: 2px solid #b4b4b4;
}

.section-name {
  display: flex;
  align-items: center;
  gap: 12px;
  height: 37px;
  padding-left: 22px;
  font-weight: 700;
}

.fold {
  width: 16px;
  height: 10px;
}

.rows {
  margin-left: 42px;
  border-left: 2px solid #dcdcdc;
  border-top: 2px solid #dcdcdc;
  margin-top: -2px;
}

.props > .section:last-child {
  border-bottom: 2px solid #dcdcdc;
}

.row {
  display: flex;
  height: 36px;
  border-bottom: 2px solid #dcdcdc;
}

.row label {
  display: flex;
  align-items: center;
  gap: 6px;
  width: 316px;
  padding: 2px 0 0 48px;
  border-right: 2px solid #dcdcdc;
}

.rows .rows .row label {
  width: 272px;
}

/* last row closes against the outer line */
.props > .section:last-child > .rows > .section:last-child .row:last-child {
  border-bottom: none;
  height: 34px;
}

.row.tall {
  height: 40px;
}

.value {
  flex: 1;
  display: flex;
  align-items: center;
  padding: 2px 0 0 7px;
}

.value input, .value select {
  flex: 1;
}

.value button {
  display: flex;
  justify-content: center;
  width: 30px;
}

.value.number input {
  text-align: right;
  padding-right: 6px;
}

.spin {
  display: flex;
  flex-direction: column;
  gap: 11px;
}

.x {
  width: 14px;
  height: 14px;
}

.current label {
  background: #c4d4a2;
}

.current .value {
  border: 2px dotted #111111;
  padding: 2px 0 0 5px;
}

.arrow {
  width: 10px;
  height: 20px;
  fill: none;
  stroke: #262626;
  stroke-width: 1.5;
}

.arrow.wide {
  width: 18px;
  height: 10px;
}

.side-tabs {
  display: flex;
  flex-direction: column;
  width: 51px;
  background: #efefef;
  margin-right: -3px;
}

.side-tabs button {
  writing-mode: vertical-rl;
  width: 44px;
  padding: 12px 0;
  line-height: 40px;
  background: #fcfcfc;
  border: 2px solid #969696;
}

.side-tabs button.active {
  width: 47px;
  padding: 18px 0 10px;
  background: #ffffff;
  border-left-color: #ffffff;
}

/* Footer */
footer {
  display: flex;
  height: 48px;
  padding: 4px 4px 0;
}

.preview {
  padding: 4px 13px 0;
  border: 2px solid #dcdcdc;
  border-bottom: none;
}
```
